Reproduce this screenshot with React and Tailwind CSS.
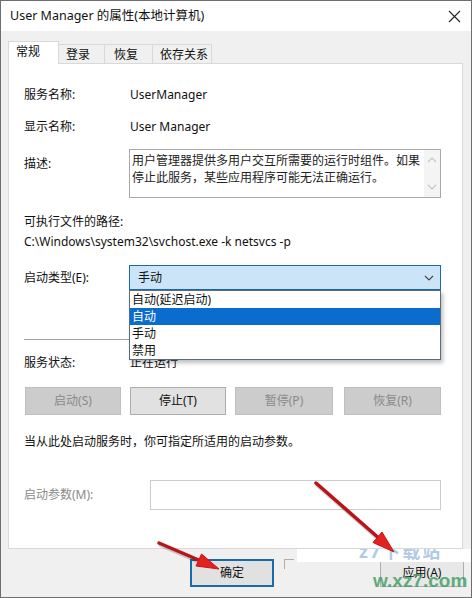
// ==============================
// Service Properties Dialog
// ==============================
const FONT = "font-['Noto_Sans','Noto_Sans_CJK_SC',sans-serif]";

function Chevron({ up = false, className = "" }) {
  return (
    <svg width="10" height="6" viewBox="0 0 10 6" className={className}>
      <polyline
        points={up ? "1,5 5,1 9,5" : "1,1 5,5 9,1"}
        fill="none"
        stroke="currentColor"
        strokeWidth="1.1"
      />
    </svg>
  );
}

function Row({ label, children, className = "" }) {
  return (
    <div className={`flex items-center h-[16px] ${className}`}>
      <div className="w-[106px]">{label}</div>
      <div>{children}</div>
    </div>
  );
}

function Arrows() {
  // tail -> tip, head polygon
  const arrows = [
    { x1: 292, y1: 297, x2: 176, y2: 314, head: "157,317 180,320.5 177.5,307.5" },
    { x1: 315, y1: 482, x2: 380, y2: 539, head: "393,551 372,541.5 381,531" },
    { x1: 158, y1: 542, x2: 200, y2: 560, head: "218,568 195,565 200.5,553" },
  ];
  return (
    <svg
      width="472"
      height="598"
      className="absolute left-0 top-0 pointer-events-none"
    >
      {arrows.map((a, i) => (
        <g key={i}>
          <line
            x1={a.x1 + 1}
            y1={a.y1 + 2}
            x2={a.x2 + 1}
            y2={a.y2 + 2}
            stroke="rgba(0,0,0,0.18)"
            strokeWidth="4"
            strokeLinecap="round"
          />
          <line
            x1={a.x1}
            y1={a.y1}
            x2={a.x2}
            y2={a.y2}
            stroke="#b8141a"
            strokeWidth="3.5"
            strokeLinecap="round"
          />
          <polygon points={a.head} fill="#e3211f" stroke="#c4161b" strokeWidth="1" />
        </g>
      ))}
    </svg>
  );
}

export default function App() {
  return (
    <div
      className={`relative w-[472px] h-[598px] overflow-hidden bg-[#f0f0f0] border border-[#6e6e6e] text-[12px] leading-[16px] text-[#111] ${FONT}`}
    >
      {/* -------- Title Bar -------- */}
      <div className="h-[30px] bg-white flex items-center justify-between pl-[9px] pr-[8px]">
        <span className="text-[12.5px]">User Manager 的属性(本地计算机)</span>
        <svg width="13" height="13" viewBox="0 0 13 13" className="mr-[2px]">
          <path d="M1 1 L12 12 M12 1 L1 12" stroke="#222" strokeWidth="1.1" />
        </svg>
      </div>

      {/* -------- Tabs -------- */}
      <div className="mt-[10px] ml-[7px] flex items-end h-[22px]">
        <div className="relative z-10 w-[51px] h-[23px] -mb-px bg-white border border-b-0 border-[#d9d9d9] pl-[7px] pt-[2px]">
          常规
        </div>
        <div className="w-[46px] h-[19px] border-t border-r border-[#d9d9d9] pl-[7px] pt-[2px]">
          登录
        </div>
        <div className="w-[48px] h-[19px] border-t border-r border-[#d9d9d9] pl-[9px] pt-[2px]">
          恢复
        </div>
        <div className="w-[59px] h-[19px] border-t border-r border-[#d9d9d9] pl-[7px] pt-[2px]">
          依存关系
        </div>
      </div>

      {/* -------- Panel -------- */}
      <div className="ml-[7px] w-[455px] h-[486px] bg-white border border-[#d9d9d9] pl-[15px] pt-[23px]">
        <Row label="服务名称:">UserManager</Row>
        <Row label="显示名称:" className="mt-[16px]">
          User Manager
        </Row>

        {/* Description */}
        <div className="flex mt-[14px]">
          <div className="w-[105px] pt-[7px]">描述:</div>
          <div className="w-[312px] h-[49px] border border-[#a9a9a9] flex">
            <div className="flex-1 pl-[2px] pt-[2px] leading-[17px] text-[#222]">
              用户管理器提供多用户交互所需要的运行时组件。如果停止此服务，某些应用程序可能无法正确运行。
            </div>
            <div className="w-[16px] bg-[#f4f4f4] flex flex-col items-center justify-between py-[7px] text-[#c4c4c4]">
              <Chevron up />
              <Chevron />
            </div>
          </div>
        </div>

        <div className="mt-[16px] h-[16px]">可执行文件的路径:</div>
        <div className="mt-[4px] h-[16px]">
          C:\Windows\system32\svchost.exe -k netsvcs -p
        </div>

        {/* Startup type */}
        <div className="flex items-center mt-[15px]">
          <div className="w-[105px]">启动类型(E):</div>
          <div className="relative w-[312px] h-[25px]">
            <div className="h-full bg-[#cce4f7] border border-[#1a6aa8] flex items-center justify-between pl-[8px] pr-[6px]">
              <span>手动</span>
              <Chevron className="text-[#444]" />
            </div>
            <div className="absolute left-0 top-[25px] z-20 w-[312px] bg-white border border-[#5b6d7d] shadow-[2px_3px_4px_rgba(0,0,0,0.25)]">
              <div className="h-[17px] pl-[2px] leading-[17px]">自动(延迟启动)</div>
              <div className="h-[17px] pl-[2px] leading-[17px] bg-[#0a6ccc] text-white">自动</div>
              <div className="h-[17px] pl-[2px] leading-[17px]">手动</div>
              <div className="h-[17px] pl-[2px] leading-[17px]">禁用</div>
            </div>
          </div>
        </div>

        <div className="mt-[49px] w-[417px] h-px bg-[#a0a0a0]" />

        <Row label="服务状态:" className="mt-[15px]">
          正在运行
        </Row>

        {/* Service buttons */}
        <div className="flex mt-[16px] ml-px h-[28px]">
          <div className="w-[96px] bg-[#cccccc] border border-[#bfbfbf] text-[#8a8a8a] flex items-center justify-center">
            启动(S)
          </div>
          <div className="ml-[9px] w-[96px] bg-[#e1e1e1] border border-[#adadad] flex items-center justify-center">
            停止(T)
          </div>
          <div className="ml-[9px] w-[98px] bg-[#cccccc] border border-[#bfbfbf] text-[#8a8a8a] flex items-center justify-center">
            暂停(P)
          </div>
          <div className="ml-[11px] w-[97px] bg-[#cccccc] border border-[#bfbfbf] text-[#8a8a8a] flex items-center justify-center">
            恢复(R)
          </div>
        </div>

        <div className="mt-[19px] h-[16px]">当从此处启动服务时，你可指定所适用的启动参数。</div>

        <div className="flex items-center mt-[30px]">
          <div className="w-[126px] text-[#8a8a8a]">启动参数(M):</div>
          <div className="w-[291px] h-[30px] border border-[#cccccc]" />
        </div>
      </div>

      {/* -------- Dialog Buttons -------- */}
      <div className="flex mt-[10px] h-[28px]">
        <div className="ml-[189px] w-[84px] bg-[#e1e1e1] border-2 border-[#1a6aa8] flex items-center justify-center">
          确定
        </div>
        <div className="ml-[10px] w-[10px] h-[10px] border-l border-t border-[#adadad]" />
        <div className="ml-[86px] w-[84px] bg-[#e8e8e8] border border-[#adadad] flex items-center justify-center">
          应用(A)
        </div>
      </div>

      {/* -------- Watermark -------- */}
      <div className="absolute left-[296px] top-[548px] w-[176px] h-[13px] bg-white overflow-hidden">
        <div className="ml-[62px] -mt-[8px] text-[18px] leading-[20px] font-bold text-[#8fb4dc] opacity-70 tracking-[2px]">
          z7下载站
        </div>
      </div>
      <div className="absolute left-[372px] top-[570px] text-[19px] leading-[20px] font-bold text-[#3c9c5e] opacity-80 font-['Liberation_Sans',sans-serif]">
        w.xz7.com
      </div>

      <Arrows />
    </div>
  );
}
